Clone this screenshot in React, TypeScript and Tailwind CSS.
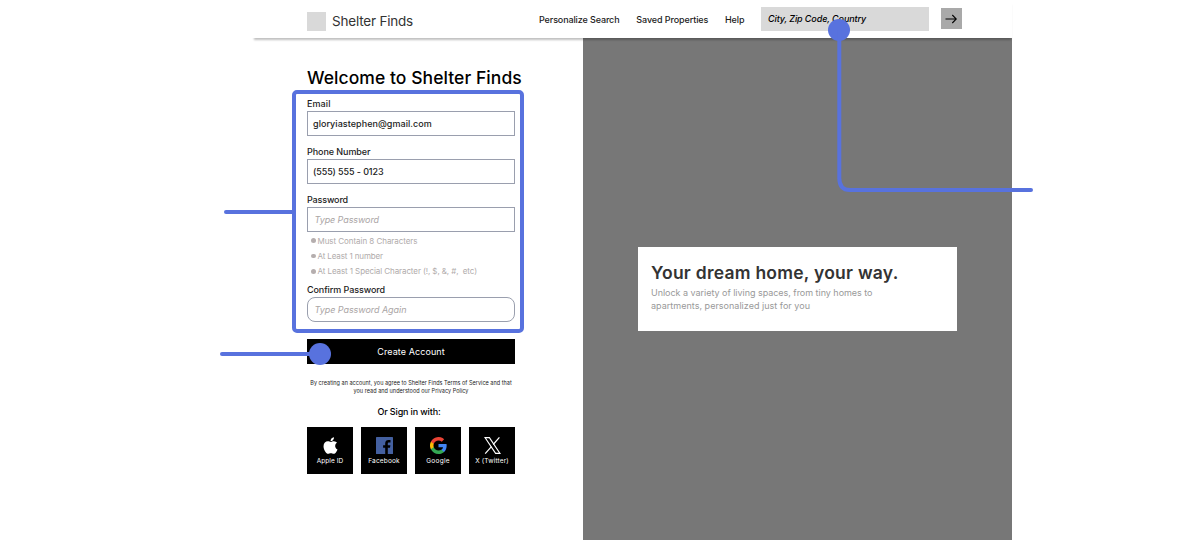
import React from "react";
import { FaApple } from "react-icons/fa";

type FieldProps = {
  label: string;
  labelClass: string;
  children: React.ReactNode;
  boxClass?: string;
};

function Field({ label, labelClass, children, boxClass = "px-[5px]" }: FieldProps) {
  return (
    <label className="block">
      <span className={`block h-[14px] text-[9px] leading-[14px] font-medium text-[#1c1c1c] ${labelClass}`}>
        {label}
      </span>
      <span className={`flex h-[25px] items-center border border-[#9a9fae] bg-white text-[9px] ${boxClass}`}>
        {children}
      </span>
    </label>
  );
}

function Rule({ text, className }: { text: string; className: string }) {
  return (
    <li className="flex h-[15.4px] items-center gap-[2px] pl-1 text-[8px] text-[#b0abab]">
      <span className="size-[4.5px] rounded-full bg-[#b5aeae]" />
      <span className={`whitespace-pre ${className}`}>{text}</span>
    </li>
  );
}

function Provider({ name, className, children }: { name: string; className: string; children: React.ReactNode }) {
  return (
    <button className="flex h-[46.5px] w-[46px] flex-col items-center bg-black pt-[9px] text-white">
      <span className="flex h-[18px] items-center">{children}</span>
      <span className={`mt-[2.6px] h-[9px] text-[6.5px] leading-[9px] whitespace-nowrap ${className}`}>{name}</span>
    </button>
  );
}

function FacebookIcon() {
  return (
    <svg width="17" height="17" viewBox="0 0 17 17">
      <rect width="17" height="17" rx="0.6" fill="#4460a0" />
      <path
        d="M9.2 17v-6.2H7.1V8.2h2.1V6.3c0-2.2 1.3-3.4 3.3-3.4.9 0 1.7.1 2 .1v2.4h-1.4c-1 0-1.3.5-1.3 1.3v1.5h2.6l-.4 2.6h-2.2V17z"
        fill="#000"
      />
    </svg>
  );
}

function GoogleIcon() {
  return (
    <svg width="17" height="17" viewBox="0 0 24 24">
      <path fill="#4285f4" d="M23.5 12.27c0-.85-.08-1.67-.22-2.45H12v4.64h6.45a5.5 5.5 0 0 1-2.39 3.62v3h3.87c2.26-2.09 3.57-5.16 3.57-8.81z" />
      <path fill="#34a853" d="M12 24c3.24 0 5.95-1.07 7.93-2.91l-3.87-3c-1.07.72-2.45 1.14-4.06 1.14-3.12 0-5.77-2.11-6.71-4.95H1.29v3.1A12 12 0 0 0 12 24z" />
      <path fill="#fbbc05" d="M5.29 14.28a7.2 7.2 0 0 1 0-4.56v-3.1H1.29a12 12 0 0 0 0 10.76z" />
      <path fill="#ea4335" d="M12 4.77c1.76 0 3.34.61 4.59 1.8l3.44-3.44A11.97 11.97 0 0 0 1.29 6.62l4 3.1C6.23 6.88 8.88 4.77 12 4.77z" />
    </svg>
  );
}

function XIcon() {
  return (
    <svg width="17" height="17" viewBox="0 0 17 17" fill="none" stroke="#fff">
      <path d="M1 .6h4.4L16 16.4h-4.4z" strokeWidth="1.1" />
      <path d="M15.4.4 9.2 7.5M7.4 9.6 1.2 16.6" strokeWidth="1.2" />
    </svg>
  );
}

function Header() {
  return (
    <header className="relative z-10 flex h-[38px] shrink-0 items-start bg-white pl-[55px] shadow-[0_3px_2px_-1.5px_rgba(0,0,0,0.25)]">
      <div className="mt-3 size-[19px] bg-[#d9d9d9]" />
      <span className="ml-[6px] h-[42px] w-[207px] text-[13.5px] leading-[42px] tracking-[-0.2px] text-[#333]">
        Shelter Finds
      </span>
      <nav className="flex h-10 text-[9px] leading-10 font-medium whitespace-nowrap text-[#1c1c1c]">
        <a className="w-[97.3px] tracking-[-0.118px]">Personalize Search</a>
        <a className="w-[88.7px] tracking-[-0.095px]">Saved Properties</a>
        <a className="w-[36.5px] tracking-[-0.082px]">Help</a>
      </nav>
      <div className="mt-[7px] flex h-6 w-[168px] items-center bg-[#d9d9d9] pl-[6.5px] text-[9px] font-medium tracking-[-0.11px] italic">
        City, Zip Code, Country
      </div>
      <button className="mt-2 ml-[11.5px] flex h-[21px] w-[21px] items-center justify-center bg-[#a9a9a9]">
        <svg width="12" height="10" viewBox="0 0 12 10" fill="none" stroke="#000" strokeWidth="1.1">
          <path d="M.5 5h10.7M7.3 1l4 4-4 4" />
        </svg>
      </button>
    </header>
  );
}

function SignUp() {
  return (
    <section className="w-[331px] pt-[27px] pl-[55px]">
      <div className="w-[208px]">
        <h1 className="h-[26px] text-[17.5px] leading-[26px] font-medium tracking-[0.06px] whitespace-nowrap">
          Welcome to Shelter Finds
        </h1>
        <div className="mt-[6px] flex flex-col gap-[9px]">
          <Field label="Email" labelClass="tracking-[0.1px]">
            <span className="font-medium tracking-[0.05px] text-[#1c1c1c]">gloryiastephen@gmail.com</span>
          </Field>
          <Field label="Phone Number" labelClass="tracking-[-0.065px]">
            <span className="font-medium tracking-[-0.102px] text-[#1c1c1c]">(555) 555 - 0123</span>
          </Field>
          <Field label="Password" labelClass="tracking-[-0.146px]" boxClass="px-[6.5px]">
            <span className="tracking-[-0.087px] text-[#aaa5a5] italic">Type Password</span>
          </Field>
        </div>
        <ul className="mt-[1px]">
          <Rule text="Must Contain 8 Characters" className="tracking-[-0.051px]" />
          <Rule text="At Least 1 number" className="tracking-[-0.125px]" />
          <Rule text="At Least 1 Special Character (!, $, &, #,  etc)" className="tracking-[-0.09px]" />
        </ul>
        <div className="mt-[3.8px]">
          <Field label="Confirm Password" labelClass="tracking-[-0.082px]" boxClass="rounded-[8px] px-[6.5px]">
            <span className="tracking-[-0.049px] text-[#aaa5a5] italic">Type Password Again</span>
          </Field>
        </div>
        <button className="mt-[17px] flex h-[25.5px] w-full items-center justify-center bg-black text-[9px] tracking-[0.085px] text-white">
          Create Account
        </button>
        <p className="mt-[14.5px] text-center text-[5.5px] leading-[8px] whitespace-nowrap text-[#222]">
          <span className="block tracking-[0.023px]">
            By creating an account, you agree to Shelter Finds Terms of Service and that
          </span>
          <span className="block tracking-[0.037px]">you read and understood our Privacy Policy</span>
        </p>
        <p className="mt-[10px] h-[14px] pr-1 text-center text-[9px] leading-[14px] font-medium tracking-[-0.143px]">
          Or Sign in with:
        </p>
        <div className="mt-[8.5px] flex justify-between">
          <Provider name="Apple ID" className="tracking-[0.053px]">
            <FaApple size={19} />
          </Provider>
          <Provider name="Facebook" className="tracking-[0.164px]">
            <FacebookIcon />
          </Provider>
          <Provider name="Google" className="tracking-[0.25px]">
            <GoogleIcon />
          </Provider>
          <Provider name="X (Twitter)" className="tracking-[0.139px]">
            <XIcon />
          </Provider>
        </div>
      </div>
    </section>
  );
}

function Hero() {
  return (
    <section className="flex-1 bg-[#777] pt-[209.4px] pl-[55px]">
      <div className="h-[84px] w-[319px] bg-white pt-[14px] pl-[13px] whitespace-nowrap">
        <h2 className="h-6 text-[17.5px] leading-6 font-semibold tracking-[0.246px] text-[#333]">
          Your dream home, your way.
        </h2>
        <p className="mt-[1px] text-[9px] leading-[13px] text-[#999]">
          <span className="block tracking-[-0.03px]">Unlock a variety of living spaces, from tiny homes to</span>
          <span className="block tracking-[0.021px]">apartments, personalized just for you</span>
        </p>
      </div>
    </section>
  );
}

function Annotations() {
  return (
    <div className="pointer-events-none absolute inset-0 z-20">
      <div className="absolute top-[90px] left-[292px] h-[243px] w-[232px] rounded-[5px] border-4 border-[#5872de]" />
      <div className="absolute top-[210px] left-[224px] h-1 w-[70px] rounded-l-full bg-[#5872de]" />
      <div className="absolute top-[352px] left-[220px] h-1 w-[92px] rounded-l-full bg-[#5872de]" />
      <div className="absolute top-[343px] left-[309px] size-[22px] rounded-full bg-[#5872de]" />
      <div className="absolute top-[19px] left-[828px] size-[22px] rounded-full bg-[#5872de]" />
      <svg className="absolute top-[30px] left-[830px]" width="210" height="170" viewBox="0 0 210 170" fill="none">
        <path d="M9.3 0V148Q9.3 160 20 160H201" stroke="#5872de" strokeWidth="4" strokeLinecap="round" />
      </svg>
    </div>
  );
}

export default function App() {
  return (
    <div className="relative flex h-[540px] w-[1188px] justify-start overflow-hidden bg-white pl-[252px] font-['Inter',sans-serif] text-black">
      <main className="flex w-[760px] flex-col">
        <Header />
        <div className="flex flex-1">
          <SignUp />
          <Hero />
        </div>
      </main>
      <Annotations />
    </div>
  );
}
